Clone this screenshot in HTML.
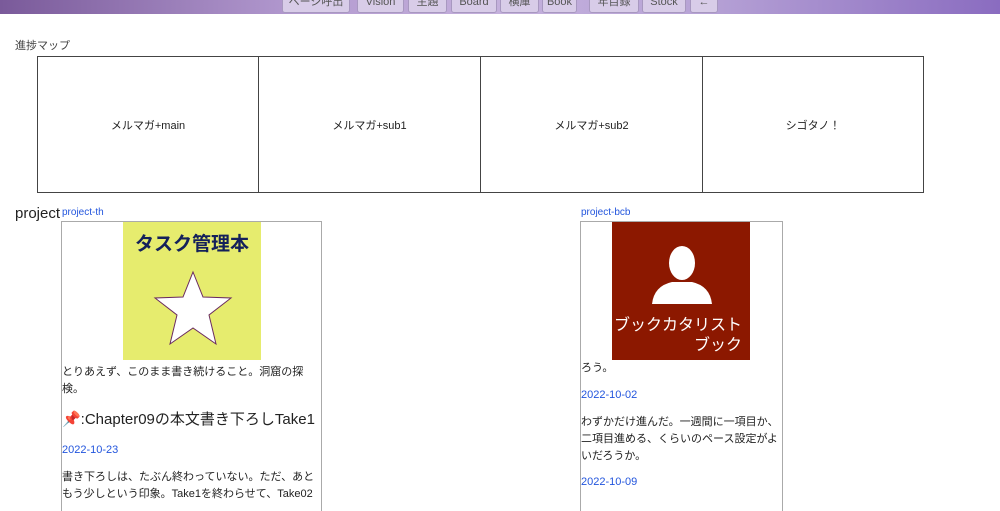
<!DOCTYPE html>
<html><head><meta charset="utf-8"><style>
body{margin:0;width:1000px;height:498px;overflow:hidden;background:#fff;font-family:"Liberation Sans","Noto Sans CJK JP",sans-serif;position:relative;color:#222}
.top{position:absolute;left:0;top:0;width:1000px;height:14px;background:linear-gradient(90deg,#7a5a9a,#b39ad0 30%,#c4b0dc 50%,#b7a3d6 70%,#8a6cc0)}
.btn{position:absolute;top:-6px;height:19px;background:#d8cce8;border:1px solid #a898c0;border-radius:3px;font-size:11px;color:#555;text-align:center;line-height:14px;box-sizing:border-box}
.a{position:absolute;font-size:11px}
.cell{position:absolute;top:56px;height:137px;border:1px solid #444;box-sizing:border-box;display:flex;align-items:center;justify-content:center;font-size:11px;color:#222}
.card{position:absolute;top:221px;border:1px solid #aaa;border-bottom:none;height:290px;box-sizing:border-box;font-size:11px;line-height:17px}
.blue{color:#2255dd}
</style></head><body>
<div class="top"></div>
<div class="btn" style="left:282px;width:68px">ページ呼出</div>
<div class="btn" style="left:357px;width:47px">Vision</div>
<div class="btn" style="left:408px;width:39px">主題</div>
<div class="btn" style="left:451px;width:46px">Board</div>
<div class="btn" style="left:500px;width:39px">横庫</div>
<div class="btn" style="left:542px;width:35px">Book</div>
<div class="btn" style="left:589px;width:50px">年目録</div>
<div class="btn" style="left:642px;width:44px">Stock</div>
<div class="btn" style="left:690px;width:28px">←</div>
<div class="a" style="left:15px;top:37px;color:#444">進捗マップ</div>
<div class="cell" style="left:37px;width:222px">メルマガ+main</div>
<div class="cell" style="left:258px;width:223px">メルマガ+sub1</div>
<div class="cell" style="left:480px;width:223px">メルマガ+sub2</div>
<div class="cell" style="left:702px;width:222px">シゴタノ！</div>
<div class="a" style="left:15px;top:205px;font-size:15px">project</div>
<div class="a blue" style="left:62px;top:207px;font-size:10px">project-th</div>
<div class="a blue" style="left:581px;top:207px;font-size:10px">project-bcb</div>
<div class="card" style="left:61px;width:261px">
<div style="margin-left:61px;width:138px;height:138px;background:#e6ec6e;position:relative">
<div style="position:absolute;top:14px;width:100%;text-align:center;font-weight:bold;font-size:19px;color:#14205a">タスク管理本</div>
<svg style="position:absolute;left:30px;top:48px" width="80" height="78" viewBox="0 0 80 78"><polygon points="40,2 50,27 78,28 56,45 63,74 40,58 17,74 24,45 2,28 30,27" fill="#fff" stroke="#6a2a60" stroke-width="1"/></svg>
</div>
<div style="padding-top:4px">とりあえず、このまま書き続けること。洞窟の探<br>検。</div>
<div style="font-size:15px;margin:12px 0 12px;line-height:20px">📌:Chapter09の本文書き下ろしTake1</div>
<div class="blue">2022-10-23</div>
<div style="margin-top:10px">書き下ろしは、たぶん終わっていない。ただ、あと<br>もう少しという印象。Take1を終わらせて、Take02</div>
</div>
<div class="card" style="left:580px;width:203px">
<div style="margin-left:31px;width:138px;height:138px;background:#8c1800;position:relative;color:#fff">
<svg style="position:absolute;left:38px;top:20px" width="64" height="64" viewBox="0 0 64 64"><ellipse cx="32" cy="21" rx="13" ry="17" fill="#fff"/><path d="M2 62 Q4 44 22 40 L42 40 Q60 44 62 62 Z" fill="#fff"/></svg>
<div style="position:absolute;top:94px;right:8px;font-size:16px;line-height:20px;text-align:right">ブックカタリスト<br>ブック</div>
</div>
<div>ろう。</div>
<div class="blue" style="margin-top:10px">2022-10-02</div>
<div style="margin-top:10px">わずかだけ進んだ。一週間に一項目か、<br>二項目進める、くらいのペース設定がよ<br>いだろうか。</div>
<div class="blue" style="margin-top:9px">2022-10-09</div>
</div>
</body></html>
